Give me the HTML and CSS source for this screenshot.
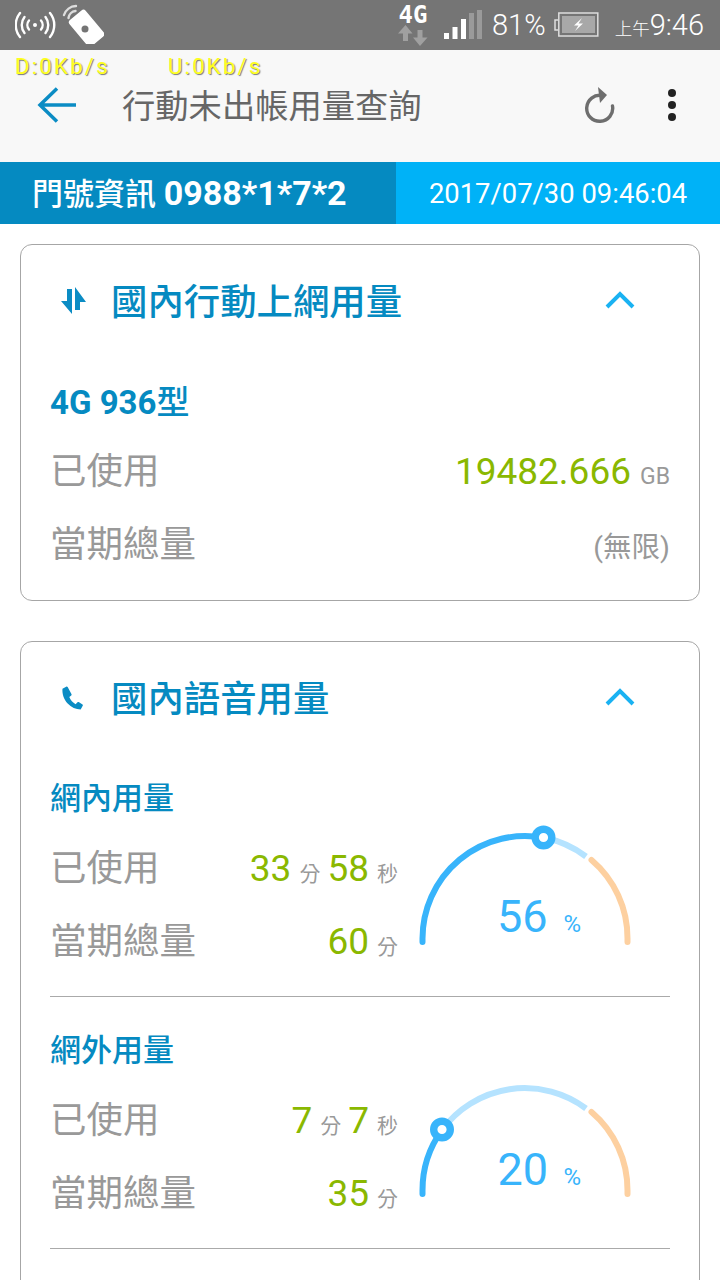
FILE: index.html
```html
<!DOCTYPE html>
<html lang="zh-Hant">
<head>
    <meta charset="UTF-8">
    <meta name="viewport" content="width=device-width, initial-scale=1.0">
    <title>行動未出帳用量查詢</title>
    <link rel="stylesheet" href="styles.css">
</head>
<body>
    <div class="status-bar">
        <div class="status-left">
            <svg class="ic-cast" width="42" height="30" viewBox="0 0 42 30" fill="none" stroke="#fff" stroke-width="2.4" stroke-linecap="round">
                <circle cx="20" cy="15" r="2" fill="#fff" stroke="none"/>
                <path d="M14 10.5a7 7 0 0 0 0 9M26 10.5a7 7 0 0 1 0 9"/>
                <path d="M9.5 7a13 13 0 0 0 0 16M30.5 7a13 13 0 0 1 0 16"/>
                <path d="M5 3a19 19 0 0 0 0 24M35 3a19 19 0 0 1 0 24"/>
            </svg>
            <svg class="ic-nfc" width="44" height="44" viewBox="0 0 44 44" fill="none">
                <rect x="10" y="18" width="34" height="21" rx="3" transform="rotate(50 27 28)" fill="#fff"/>
                <circle cx="25" cy="29" r="3.5" fill="#757575"/>
                <path d="M4 15a13 13 0 0 1 12-9M8.5 18a8 8 0 0 1 7-7" stroke="#ddd" stroke-width="2.4" stroke-linecap="round"/>
            </svg>
        </div>
        <div class="status-right">
            <div class="net">
                <span class="net-label">4G</span>
                <svg width="30" height="21" viewBox="0 0 30 21" fill="#a0a0a0">
                    <path d="M7.500 0l7 8.500h-4.500v7.500h-5V8.500H0zM22 21l-7-8.500h4.500V5h5v7.500H29.500z"/>
                </svg>
            </div>
            <svg class="signal" width="38" height="30" viewBox="0 0 38 30">
                <rect x="0" y="23" width="5" height="6" fill="#fff"/>
                <rect x="8.5" y="17" width="5" height="12" fill="#fff"/>
                <rect x="17" y="9" width="5" height="20" fill="#fff"/>
                <rect x="25" y="3" width="5" height="26" fill="#9a9a9a"/>
                <rect x="33" y="0" width="5" height="29" fill="#9a9a9a"/>
            </svg>
            <span class="batt-text">81%</span>
            <svg class="batt" width="46" height="26" viewBox="0 0 46 26" fill="none">
                <path d="M5 8H2v10h3" stroke="#ddd" stroke-width="1.5"/>
                <rect x="5.8" y="1" width="39" height="23" stroke="#ddd" stroke-width="1.5"/>
                <rect x="9" y="4" width="33" height="17" fill="#a8a8a8"/>
                <path d="M29 6l-8 7.500h4.500L22 19l8-7.500h-4.500z" fill="#fff"/>
            </svg>
            <span class="clock"><small>上午</small>9:46</span>
        </div>
    </div>

    <div class="toolbar">
        <div class="speed">
            <span class="speed-d">D:0Kb/s</span>
            <span>U:0Kb/s</span>
        </div>
        <div class="toolbar-row">
            <svg class="ic-back" width="40" height="36" viewBox="0 0 40 36" fill="none" stroke="#0b8cc4" stroke-width="3.5">
                <path d="M39 18H3M20 1.500L3 18l17 16.500"/>
            </svg>
            <span class="page-title">行動未出帳用量查詢</span>
            <svg class="ic-refresh" width="32" height="36" viewBox="0 0 32 36" fill="none">
                <path d="M18 8.500A13 13 0 1 0 28.500 19" stroke="#6e6e6e" stroke-width="3.4" stroke-linecap="round"/>
                <path d="M14 0l9 8-7 8z" fill="#6e6e6e"/>
            </svg>
            <div class="dots"><i></i><i></i><i></i></div>
        </div>
    </div>

    <div class="info-bar">
        <div class="info-number">門號資訊 <b>0988*1*7*2</b></div>
        <div class="info-date">2017/07/30 09:46:04</div>
    </div>

    <div class="card card-data">
        <div class="card-head">
            <svg class="ic-updown" width="28" height="28" viewBox="0 0 28 28" fill="#0b8cc4">
                <path d="M8 2h5v25L2 14h6zM16 0l11 15h-6v8h-5z"/>
            </svg>
            <h2>國內行動上網用量</h2>
            <svg class="chevron" width="30" height="18" viewBox="0 0 30 18" fill="none" stroke="#1ab2f2" stroke-width="4">
                <path d="M2 16L15 3l13 13"/>
            </svg>
        </div>
        <h3 class="plan"><b>4G 936</b>型</h3>
        <div class="row row-first">
            <span class="row-label">已使用</span>
            <span><em class="val">19482.666</em><small class="unit unit-en">GB</small></span>
        </div>
        <div class="row">
            <span class="row-label">當期總量</span>
            <span class="unlimited">(無限)</span>
        </div>
    </div>

    <div class="card card-voice">
        <div class="card-head">
            <svg class="ic-phone" width="26" height="26" viewBox="0 0 24 24" fill="#0b8cc4">
                <path d="M6.600 1.500L3.200 3.400C2.800 8.500 4.600 13.500 8 17c3.300 3.500 7.600 5.500 12 5.500l2-3.500c.2-.4.100-.8-.3-1l-3.500-2.200c-.4-.2-.8-.2-1.100.1l-1.800 1.800c-2.600-1.400-4.600-3.700-5.800-6.600l1.800-1.400c.3-.3.400-.7.300-1.100L8 1.900c-.2-.5-.9-.7-1.400-.4z"/>
            </svg>
            <h2>國內語音用量</h2>
            <svg class="chevron" width="30" height="18" viewBox="0 0 30 18" fill="none" stroke="#1ab2f2" stroke-width="4">
                <path d="M2 16L15 3l13 13"/>
            </svg>
        </div>

        <div class="usage">
            <h3 class="usage-title">網內用量</h3>
            <div class="usage-body">
                <div>
                    <div class="row">
                        <span class="row-label">已使用</span>
                        <span><em class="val">33</em><small class="unit">分</small><em class="val">58</em><small class="unit">秒</small></span>
                    </div>
                    <div class="row">
                        <span class="row-label">當期總量</span>
                        <span><em class="val">60</em><small class="unit">分</small></span>
                    </div>
                </div>
                <svg class="gauge" width="272" height="146" viewBox="0 0 272 146" fill="none" stroke-width="6" stroke-linecap="round">
                    <path d="M24.500 110V106.500A102.500 102.500 0 0 1 146 5.800" stroke="#38b4fb"/>
                    <path d="M146 5.800A102.500 102.500 0 0 1 188 24.500" stroke="#b5e3ff" stroke-linecap="butt"/>
                    <path d="M193.500 28A102.500 102.500 0 0 1 229.500 106.500V110" stroke="#fdd0a0"/>
                    <circle cx="145.500" cy="5.500" r="8.300" fill="#fff" stroke="#38b4fb" stroke-width="7.400"/>
                    <text class="gauge-num" x="99" y="100">56</text>
                    <text class="gauge-pct" x="165.500" y="100">%</text>
                </svg>
            </div>
        </div>

        <div class="usage">
            <h3 class="usage-title">網外用量</h3>
            <div class="usage-body">
                <div>
                    <div class="row">
                        <span class="row-label">已使用</span>
                        <span><em class="val">7</em><small class="unit">分</small><em class="val">7</em><small class="unit">秒</small></span>
                    </div>
                    <div class="row">
                        <span class="row-label">當期總量</span>
                        <span><em class="val">35</em><small class="unit">分</small></span>
                    </div>
                </div>
                <svg class="gauge" width="272" height="146" viewBox="0 0 272 146" fill="none" stroke-width="6" stroke-linecap="round">
                    <path d="M24.500 110V106.500A102.500 102.500 0 0 1 44 46" stroke="#38b4fb"/>
                    <path d="M44 46A102.500 102.500 0 0 1 188 24.500" stroke="#b5e3ff" stroke-linecap="butt"/>
                    <path d="M193.500 28A102.500 102.500 0 0 1 229.500 106.500V110" stroke="#fdd0a0"/>
                    <circle cx="44" cy="45.500" r="8.300" fill="#fff" stroke="#38b4fb" stroke-width="7.400"/>
                    <text class="gauge-num" x="99.500" y="101">20</text>
                    <text class="gauge-pct" x="165.500" y="101">%</text>
                </svg>
            </div>
        </div>
    </div>
</body>
</html>
```

FILE: styles.css
```css
html, body {
    margin: 0;
    padding: 0;
    height: 1280px;
    overflow: hidden;
}
body {
    font-family: Roboto, "Noto Sans CJK TC", sans-serif;
    background: #fff;
    color: #999;
}
h2, h3 {
    margin: 0;
    font-weight: 500;
}
em {
    font-style: normal;
}

/* status bar */
.status-bar {
    height: 50px;
    background: #757575;
    color: #fff;
    display: flex;
    justify-content: space-between;
    align-items: center;
}
.status-left {
    display: flex;
    align-items: center;
    padding-left: 15px;
}
.ic-nfc {
    margin: -6px 0 0 3px;
}
.status-right {
    display: flex;
    align-items: center;
    padding-right: 16px;
}
.net {
    display: flex;
    flex-direction: column;
    align-items: center;
    width: 30px;
}
.net-label {
    font-family: "DejaVu Sans Mono", monospace;
    font-weight: bold;
    font-size: 24px;
    line-height: 20px;
}
.signal {
    margin-left: 16px;
}
.batt-text {
    margin-left: 10px;
    font-size: 29px;
    font-weight: 300;
}
.batt {
    margin-left: 7px;
}
.clock {
    margin-left: 16px;
    font-size: 29px;
    font-weight: 300;
}
.clock small {
    font-size: 17.5px;
}

/* toolbar */
.toolbar {
    height: 112px;
    background: #f8f8f8;
}
.speed {
    display: flex;
    height: 31px;
    padding-left: 15px;
    font-size: 22px;
    letter-spacing: 2.3px;
    line-height: 34px;
    color: #ffff1e;
    text-shadow: 1px 1px 1px #777;
}
.speed-d {
    width: 153px;
}
.toolbar-row {
    display: flex;
    align-items: center;
    height: 48px;
}
.ic-back {
    margin-left: 37px;
}
.page-title {
    margin-left: 45px;
    width: 462px;
    padding-bottom: 4px;
    font-size: 33.3px;
    color: #666;
}
.dots {
    margin-left: 52px;
    display: flex;
    flex-direction: column;
    gap: 4px;
}
.dots i {
    display: block;
    width: 8px;
    height: 8px;
    border-radius: 50%;
    background: #222;
}

/* number / date strip */
.info-bar {
    display: flex;
    height: 62px;
    line-height: 62px;
    color: #fff;
}
.info-number {
    width: 364px;
    padding-left: 32px;
    background: #058ac1;
    font-size: 31px;
    font-weight: 500;
}
.info-number b {
    font-size: 34px;
    font-weight: 700;
}
.info-date {
    flex: 1;
    background: #00b2f7;
    text-align: center;
    font-size: 27.4px;
    line-height: 65px;
}

/* cards */
.card {
    margin: 20px 20px 0;
    padding: 0 29px 20px;
    border: 1px solid #a6a6a6;
    border-radius: 12px;
}
.card + .card {
    margin-top: 40px;
}
.card-data {
    height: 335px;
}
/* runs on past the bottom of the window */
.card-voice {
    min-height: 720px;
}
.card-head {
    display: flex;
    align-items: center;
    height: 114px;
    color: #058ac1;
}
.ic-updown, .ic-phone {
    margin: -2px 0 0 9px;
}
.ic-phone {
    margin-right: 2px;
}
.card-head h2 {
    flex: 1;
    margin-left: 24px;
    padding-bottom: 6px;
    font-size: 36.4px;
}
.chevron {
    margin: -4px 35px 0 0;
}
.plan {
    margin-top: 19px;
    height: 50px;
    line-height: 50px;
    font-size: 33px;
    color: #058ac1;
}
.plan b {
    font-weight: 700;
}
.row-first {
    margin-top: 7px;
}
.row {
    display: flex;
    justify-content: space-between;
    align-items: center;
    height: 73px;
}
.row-label {
    padding-bottom: 7px;
    font-size: 36.5px;
    color: #999;
}
.val {
    font-size: 37px;
    color: #8ab800;
}
.unit {
    margin: 0 7px 0 8px;
    font-size: 21px;
    color: #999;
}
.unit:last-child {
    margin-right: 0;
}
.unit-en {
    margin-left: 9px;
    font-size: 23px;
}
.unlimited {
    font-size: 28.5px;
    color: #999;
}

/* voice usage block */
.usage {
    height: 223px;
    padding-top: 17px;
    border-bottom: 1px solid #aaa;
}
.usage-title {
    height: 50px;
    line-height: 50px;
    margin-top: 1px;
    margin-bottom: -1px;
    font-size: 31px;
    color: #058ac1;
}
.usage-body {
    display: grid;
    grid-template-columns: 348px 272px;
    margin-top: 9px;
}
.usage + .usage {
    margin-top: 11px;
}
.gauge {
    overflow: visible;
}
.gauge-num {
    font-family: Roboto, sans-serif;
    font-size: 45px;
    fill: #38b4fb;
    stroke: none;
}
.gauge-pct {
    font-family: Roboto, sans-serif;
    font-size: 24px;
    fill: #38b4fb;
    stroke: none;
}
```
